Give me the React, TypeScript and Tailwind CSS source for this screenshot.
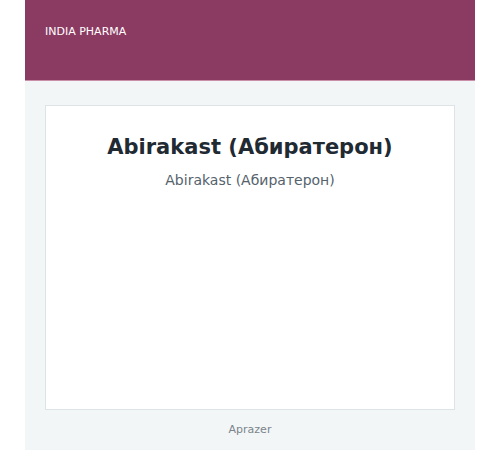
export default function App() {
  return (
    <div className="min-h-screen bg-white font-['DejaVu_Sans',sans-serif]">
      <div className="mx-auto w-[450px] bg-[#f3f6f7]">
        {/* Header */}
        <header className="h-[81px] bg-[#8b3a62] border-b border-[#c98fa9] px-5 pt-[25px] text-[11px] leading-[14px] text-white">
          INDIA PHARMA
        </header>

        {/* Main */}
        <main className="px-5 pt-[24px]">
          <div className="h-[305px] bg-white border border-[#dde3e6] pt-[27px] text-center">
            <h1 className="text-[21px] leading-[28px] font-bold text-[#1f2a33]">Abirakast (Абиратерон)</h1>
            <p className="mt-[10px] text-[14px] leading-[18px] text-[#55626c]">Abirakast (Абиратерон)</p>
          </div>
        </main>

        {/* Footer */}
        <footer className="h-[40px] pt-[13px] text-center text-[11px] leading-[14px] text-[#7a858c]">
          Aprazer
        </footer>
      </div>
    </div>
  );
}
